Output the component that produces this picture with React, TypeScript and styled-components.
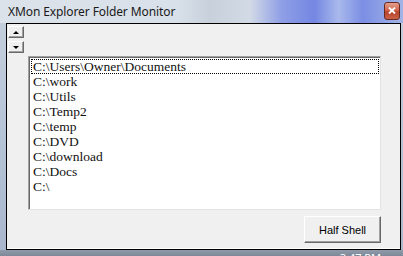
import styled, { createGlobalStyle } from "styled-components";

const GlobalStyle = createGlobalStyle`
  html, body {
    margin: 0;
    padding: 0;
    background: #b9c6d6;
  }
  #root {
    width: 403px;
    height: 256px;
    overflow: hidden;
  }
`;

const folders = [
  "C:\\Users\\Owner\\Documents",
  "C:\\work",
  "C:\\Utils",
  "C:\\Temp2",
  "C:\\temp",
  "C:\\DVD",
  "C:\\download",
  "C:\\Docs",
  "C:\\",
];

const Window = styled.div`
  width: 403px;
  height: 256px;
  display: flex;
  flex-direction: column;
  background: linear-gradient(180deg, #c6d1de 0%, #b4c2d6 60%, #a9b6cc 100%);
`;

const TitleBar = styled.div`
  height: 23px;
  flex: none;
  display: flex;
  align-items: center;
  justify-content: space-between;
  padding: 0 3px 0 8px;
  background: linear-gradient(
    90deg,
    #dbe2ea 0%,
    #d8e0e9 44%,
    #c8d0dc 52%,
    #d2dae6 62%,
    #8e9ee6 70%,
    #7487e2 78%,
    #a9b9ec 84%,
    #7b8ee4 90%,
    #a3b5e6 100%
  );
`;

const Title = styled.span`
  font-family: "Noto Sans", "Open Sans", sans-serif;
  font-size: 12px;
  color: #1a1a1a;
  letter-spacing: -0.1px;
`;

const CloseButton = styled.div`
  width: 14px;
  height: 16px;
  margin-top: -2px;
  border: 1px solid #6b2a20;
  border-radius: 3px;
  background: linear-gradient(180deg, #e4a08e 0%, #d2674e 45%, #b9412a 55%, #c8624a 100%);
  display: flex;
  align-items: center;
  justify-content: center;
`;

const Body = styled.div`
  flex: 1;
  display: flex;
  padding: 0 2px 0 6px;
`;

const Client = styled.div`
  flex: 1;
  display: flex;
  flex-direction: column;
  border: 1px solid #000;
  box-shadow: inset 0 -1px 0 #ffffff;
  background: #f0f0f0;
  padding: 2px 19px 4px 1px;
`;

const Spinner = styled.div`
  display: flex;
  flex-direction: column;
  gap: 3px;
  width: 16px;
`;

const SpinButton = styled.div`
  height: 10px;
  background: #f0f0f0;
  border-top: 1px solid #ffffff;
  border-left: 1px solid #ffffff;
  border-right: 1px solid #696969;
  border-bottom: 1px solid #696969;
  box-shadow: inset -1px -1px 0 #a0a0a0;
  display: flex;
  align-items: center;
  justify-content: center;
`;

const Arrow = styled.div<{ up: boolean }>`
  width: 0;
  height: 0;
  border-left: 3px solid transparent;
  border-right: 3px solid transparent;
  ${(props) =>
    props.up ? "border-bottom: 3px solid #000;" : "border-top: 3px solid #000;"}
`;

const ListBox = styled.div`
  margin: 3px 0 0 20px;
  height: 154px;
  box-sizing: border-box;
  background: #ffffff;
  border-top: 1px solid #a0a0a0;
  border-left: 1px solid #a0a0a0;
  border-right: 1px solid #e3e3e3;
  border-bottom: 1px solid #e3e3e3;
  box-shadow: inset 1px 1px 0 #696969;
  padding: 2px 1px 0 2px;
`;

const Item = styled.div<{ focused: boolean }>`
  height: 15px;
  padding-left: 1px;
  font-family: "Liberation Serif", "Times New Roman", serif;
  font-size: 13.5px;
  line-height: 13px;
  color: #111;
  white-space: nowrap;
  box-sizing: border-box;
  border: 1px dotted ${(props) => (props.focused ? "#000" : "transparent")};
`;

const ButtonRow = styled.div`
  display: flex;
  justify-content: flex-end;
  margin-top: 6px;
`;

const PushButton = styled.div`
  width: 77px;
  height: 27px;
  box-sizing: border-box;
  background: #f0f0f0;
  border-top: 1px solid #ffffff;
  border-left: 1px solid #ffffff;
  border-right: 1px solid #696969;
  border-bottom: 1px solid #696969;
  box-shadow: inset -1px -1px 0 #a0a0a0;
  display: flex;
  align-items: center;
  justify-content: center;
  font-family: "Liberation Sans", Arial, sans-serif;
  font-size: 11px;
  color: #000;
`;

const Taskbar = styled.div`
  height: 6px;
  flex: none;
  overflow: hidden;
  display: flex;
  justify-content: flex-end;
  padding-right: 22px;
  background: linear-gradient(180deg, #8f9baa 0%, #7d8999 100%);
`;

const Clock = styled.span`
  font-family: "Noto Sans", sans-serif;
  font-size: 11px;
  line-height: 14px;
  color: #ffffff;
  margin-top: 1px;
`;

export default function App() {
  return (
    <>
      <GlobalStyle />
      <Window>
        <TitleBar>
          <Title>XMon Explorer Folder Monitor</Title>
          <CloseButton>
            <svg width="8" height="7" viewBox="0 0 8 7">
              <path d="M1 0.5 L7 6.5 M7 0.5 L1 6.5" stroke="#fff" strokeWidth="1.8" />
            </svg>
          </CloseButton>
        </TitleBar>
        <Body>
          <Client>
            <Spinner>
              <SpinButton>
                <Arrow up={true} />
              </SpinButton>
              <SpinButton>
                <Arrow up={false} />
              </SpinButton>
            </Spinner>
            <ListBox>
              {folders.map((f, i) => (
                <Item key={f} focused={i === 0}>
                  {f}
                </Item>
              ))}
            </ListBox>
            <ButtonRow>
              <PushButton>Half Shell</PushButton>
            </ButtonRow>
          </Client>
        </Body>
        <Taskbar>
          <Clock>3:47 PM</Clock>
        </Taskbar>
      </Window>
    </>
  );
}
